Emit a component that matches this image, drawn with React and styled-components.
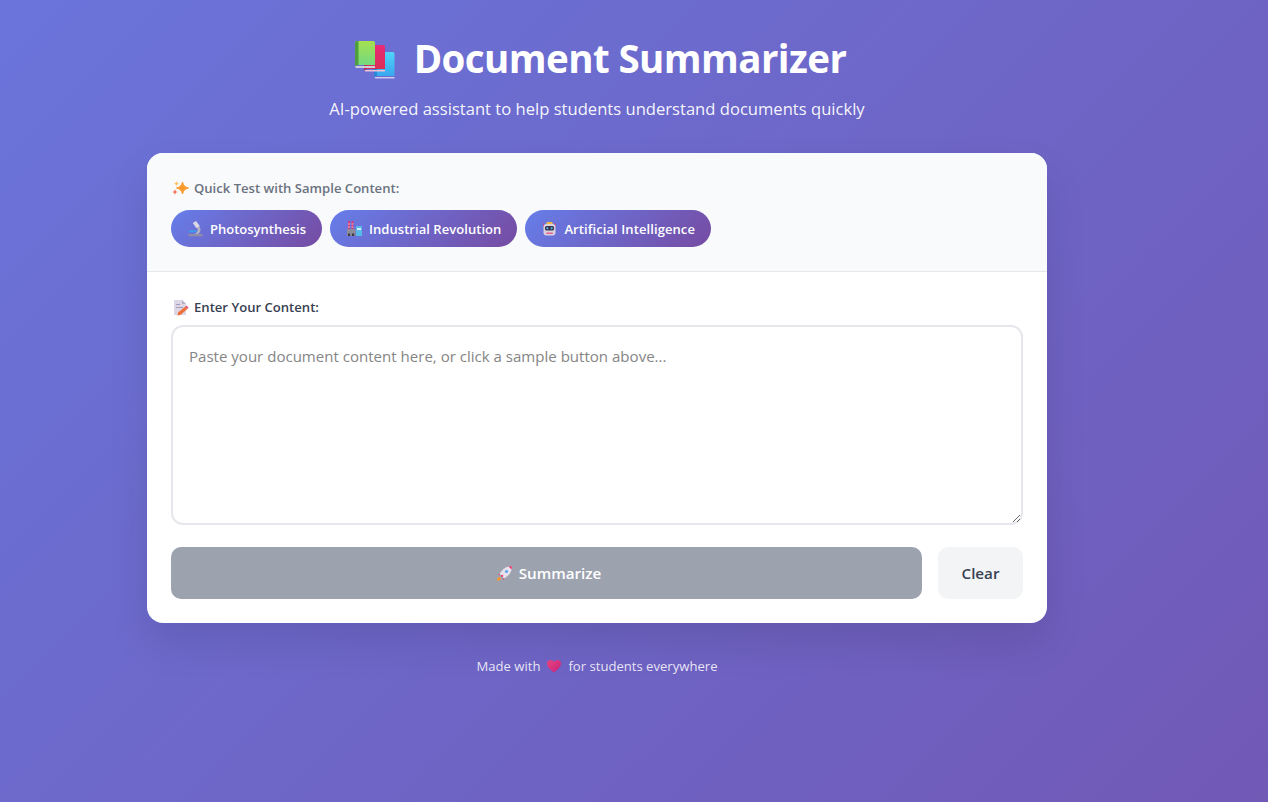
import React from 'react';
import styled, { createGlobalStyle } from 'styled-components';

const FONT = "'Open Sans', 'Noto Sans', sans-serif";

const GlobalStyle = createGlobalStyle`
  * { box-sizing: border-box; }
  html, body { margin: 0; padding: 0; }
  body {
    min-height: 100vh;
    font-family: ${FONT};
    background: linear-gradient(135deg, #6a74da 0%, #7159b6 100%);
  }
`;

const Page = styled.div`
  width: 1194px;
  padding: 32px 147px 0;
`;

const Header = styled.header`
  color: #fff;
  margin-bottom: 32px;
`;

const Title = styled.h1`
  display: flex;
  justify-content: center;
  align-items: center;
  gap: 17px;
  margin: 0 0 13px;
  font-size: 38.5px;
  line-height: 52px;
  font-weight: 700;
  letter-spacing: -0.58px;

  svg {
    margin-left: 5px;
  }
`;

const Subtitle = styled.p`
  margin: 0;
  text-align: center;
  font-size: 16.6px;
  line-height: 24px;
  color: rgba(255, 255, 255, 0.95);
`;

const Card = styled.main`
  background: #fff;
  border-radius: 16px;
  overflow: hidden;
  box-shadow: 0 20px 40px rgba(0, 0, 0, 0.1);
`;

const SampleSection = styled.section`
  padding: 24px;
  background: #f9fafb;
  border-bottom: 1px solid #e5e7eb;
`;

const InputSection = styled.section`
  padding: 24px;
`;

const Label = styled.div`
  display: flex;
  align-items: center;
  gap: 5px;
  height: 21px;
  font-size: 13.1px;
  font-weight: 600;
  color: ${(p) => p.$color};
  margin-bottom: ${(p) => p.$gap}px;
`;

const Pills = styled.div`
  display: flex;
  gap: 8px;
`;

const Pill = styled.button`
  display: flex;
  align-items: center;
  gap: 6px;
  border: 0;
  border-radius: 20px;
  height: 37px;
  padding: 0 16px;
  font-family: ${FONT};
  font-size: 13px;
  font-weight: 600;
  letter-spacing: ${(p) => p.$track || 0}px;
  color: #fff;
  background: linear-gradient(135deg, #667eea 0%, #764ba2 100%);
`;

const TextArea = styled.textarea`
  display: block;
  width: 100%;
  height: 200px;
  padding: 17px 16px 16px;
  border: 2px solid #e5e7eb;
  border-radius: 12px;
  font-family: ${FONT};
  font-size: 15.05px;
  line-height: 24px;
  outline: none;

  &::placeholder {
    color: #858585;
  }
`;

const Actions = styled.div`
  display: flex;
  gap: 16px;
  margin-top: 22px;
`;

const ActionButton = styled.button`
  display: flex;
  justify-content: center;
  align-items: center;
  gap: 6px;
  height: 52px;
  border: 0;
  border-radius: 10px;
  font-family: ${FONT};
  font-size: 15.2px;
  font-weight: 600;
`;

const Summarize = styled(ActionButton)`
  flex: 1;
  background: #9ca3af;
  color: #fff;

  svg {
    margin-left: 4px;
  }
`;

const Clear = styled(ActionButton)`
  width: 85px;
  background: #f3f4f6;
  color: #374151;
`;

const Footer = styled.footer`
  display: flex;
  justify-content: center;
  align-items: center;
  gap: 6px;
  margin-top: 34px;
  font-size: 13.1px;
  line-height: 18px;
  color: rgba(255, 255, 255, 0.85);
`;

const Emoji = styled.svg`
  display: block;
  flex: none;
  width: ${(p) => p.$size}px;
  height: ${(p) => p.$size}px;
`;

const Books = () => (
  <Emoji $size={44} viewBox="0 -1 44 44" aria-hidden="true">
    <defs>
      <linearGradient id="bGreen" x1="0" y1="0" x2="0" y2="1">
        <stop offset="0" stopColor="#a5e04f" />
        <stop offset="1" stopColor="#70d884" />
      </linearGradient>
      <linearGradient id="bPink" x1="0" y1="0" x2="0" y2="1">
        <stop offset="0" stopColor="#e82a78" />
        <stop offset="1" stopColor="#d92f52" />
      </linearGradient>
      <linearGradient id="bBlue" x1="0" y1="0" x2="0" y2="1">
        <stop offset="0" stopColor="#50d4f8" />
        <stop offset="1" stopColor="#38a4ee" />
      </linearGradient>
    </defs>
    <path d="M23 15h17a1.500 1.500 0 0 1 1.500 1.500V39H24a3 3 0 0 0-3 1.500V17a2 2 0 0 1 2-2z" fill="url(#bBlue)" />
    <path d="M21 17a2 2 0 0 1 2-2h1v24a3 3 0 0 0-3 1.500z" fill="#2a86d8" />
    <path d="M22 40h19.500v1.500H22.500a1 1 0 0 1-.5-1.500z" fill="#cfc9ea" />
    <path d="M13 8h17.500a1.500 1.500 0 0 1 1.500 1.500V32H14a3 3 0 0 0-3 1.500V10a2 2 0 0 1 2-2z" fill="url(#bPink)" />
    <path d="M11 10a2 2 0 0 1 2-2h1v24a3 3 0 0 0-3 1.500z" fill="#b5234f" />
    <path d="M12 33h20v1.500H12.500a1 1 0 0 1-.5-1.500z" fill="#eec0d4" />
    <path d="M4 4h16.500A1.500 1.500 0 0 1 22 5.500V28H5a3 3 0 0 0-3 1.500V6a2 2 0 0 1 2-2z" fill="url(#bGreen)" />
    <path d="M2 6a2 2 0 0 1 2-2h1.500v24H5a3 3 0 0 0-3 1.500z" fill="#4e9e3e" />
    <path d="M3 29h19v2H3.500a1 1 0 0 1-.5-2z" fill="#cfcbd8" />
  </Emoji>
);

const Sparkles = () => (
  <Emoji $size={18} viewBox="0 0 18 18" aria-hidden="true">
    <path d="M11.500 3c1 3.800 2.200 5 6 6-3.800 1-5 2.200-6 6-1-3.800-2.200-5-6-6 3.800-1 5-2.200 6-6z" fill="#fb9a2c" stroke="#fb9a2c" strokeWidth="1" strokeLinejoin="round" />
    <path d="M5.500 2c.4 1.700 1 2.300 2.700 2.700-1.700.4-2.300 1-2.700 2.700-.4-1.700-1-2.300-2.700-2.700 1.700-.4 2.300-1 2.700-2.700z" fill="#fdc56a" />
    <path d="M4 10c.4 1.900 1.100 2.600 3 3-1.900.4-2.600 1.100-3 3-.4-1.900-1.100-2.600-3-3 1.900-.4 2.600-1.100 3-3z" fill="#f4775a" />
  </Emoji>
);

const Microscope = () => (
  <Emoji $size={17} viewBox="0 0 17 17" aria-hidden="true">
    <path d="M1.500 14h14v2.300h-14z" fill="#8f8ea6" />
    <path d="M11 5.500c3.200 2 3.400 6.300.2 8.500H7.500c3.200-1.200 4-4.200 2.300-7z" fill="#b4b2c2" />
    <path d="M5.800 3l3.200-2 3.800 5-3.400 2.200z" fill="#dad8e4" />
    <path d="M2 10.500h7.500V12.200H2z" fill="#3aa0f0" />
  </Emoji>
);

const Factory = () => (
  <Emoji $size={17} viewBox="0 0 17 17" aria-hidden="true">
    <path d="M2 1h1.900v8H2zM5.500 1h1.900v8H5.500z" fill="#d6386f" />
    <path d="M2 3.500h1.900v1H2zM5.500 3.500h1.900v1H5.500zM2 6.500h1.900v1H2zM5.500 6.500h1.900v1H5.500z" fill="#efbbd0" />
    <path d="M1 9h8.500v7H1z" fill="#8d8c99" />
    <path d="M10 6h6v10h-6z" fill="#57b8ea" />
    <path d="M11 8h4v2h-4z" fill="#d3ecf8" />
    <path d="M2 13.500h2.200V16H2zM6 13.500h2.200V16H6z" fill="#3d3c4a" />
  </Emoji>
);

const Robot = () => (
  <Emoji $size={17} viewBox="0 0 17 17" aria-hidden="true">
    <path d="M2 1.500l1.200 5H2zM15 1.500l-1.200 5H15z" fill="#e23c76" />
    <path d="M6 2h5l1 2H5z" fill="#f0b84a" />
    <rect x="2.500" y="4" width="12" height="11.500" rx="3" fill="#d8d2de" />
    <rect x="4" y="6" width="9" height="4.500" rx="1.500" fill="#3a3550" />
    <circle cx="6.300" cy="8.200" r="1" fill="#55c6f5" />
    <circle cx="10.700" cy="8.200" r="1" fill="#55c6f5" />
    <rect x="5" y="12.500" width="7" height="1.500" rx=".7" fill="#e8628f" />
  </Emoji>
);

const Memo = () => (
  <Emoji $size={18} viewBox="0 0 18 18" aria-hidden="true">
    <path d="M3 2h8l4 4v11H3z" fill="#dcd6e6" />
    <path d="M11 2l4 4h-4z" fill="#b9b0c8" />
    <path d="M5 6h4v1H5zM5 9h7v1H5z" fill="#a79cb8" />
    <path d="M7 14.500l7.500-6 2 2.200-7 6.300-3 .5z" fill="#f0703a" />
    <path d="M14.500 8.500l2 2.200 1-1-2-2.200z" fill="#e23c76" />
  </Emoji>
);

const Rocket = () => (
  <Emoji $size={17} viewBox="0 0 17 17" aria-hidden="true">
    <path d="M1 16c.2-2.300.8-3.500 2.300-4.200l1.800 1.800C4.500 15.200 3.300 15.800 1 16z" fill="#f59a2e" />
    <path d="M4 8.500L1.800 9.800l2 .3zM8.500 13l-1.300 2.200-.3-2z" fill="#e8336f" />
    <path d="M15.800 1.200c.3 4-1.200 7.400-4.500 10L8 13.500 3.500 9l2.300-3.300c2.600-3.300 6-4.800 10-4.500z" fill="#e6e1ea" />
    <path d="M15.800 1.200c.1 1.200 0 2.300-.2 3.300l-3.100-3.100c1-.2 2.100-.3 3.300-.2z" fill="#f0356f" />
    <circle cx="10.500" cy="6.500" r="1.600" fill="#5aa7ee" />
    <path d="M6 9.500l1.500 1.500L6.200 12.300 4.700 10.800z" fill="#f0356f" />
  </Emoji>
);

const Heart = () => (
  <Emoji $size={16} viewBox="0 0 16 16" aria-hidden="true">
    <defs>
      <linearGradient id="heartFill" x1="0" y1="0" x2="1" y2="1">
        <stop offset="0" stopColor="#e8457e" />
        <stop offset="1" stopColor="#c9207c" />
      </linearGradient>
    </defs>
    <path d="M8 14.500C3.500 11 1 8.500 1 5.500 1 3.200 2.700 2 4.500 2 6 2 7.300 2.800 8 4.200 8.700 2.800 10 2 11.500 2 13.300 2 15 3.200 15 5.500c0 3-2.500 5.500-7 9z" fill="url(#heartFill)" />
  </Emoji>
);

export default function App() {
  return (
    <Page>
      <GlobalStyle />
      <Header>
        <Title><Books />Document Summarizer</Title>
        <Subtitle>AI-powered assistant to help students understand documents quickly</Subtitle>
      </Header>
      <Card>
        <SampleSection>
          <Label $color="#6b7280" $gap={12}><Sparkles />Quick Test with Sample Content:</Label>
          <Pills>
            <Pill><Microscope />Photosynthesis</Pill>
            <Pill $track={0.05}><Factory />Industrial Revolution</Pill>
            <Pill $track={0.09}><Robot />Artificial Intelligence</Pill>
          </Pills>
        </SampleSection>
        <InputSection>
          <Label $color="#374151" $gap={8}><Memo />Enter Your Content:</Label>
          <TextArea placeholder="Paste your document content here, or click a sample button above..." />
          <Actions>
            <Summarize><Rocket />Summarize</Summarize>
            <Clear>Clear</Clear>
          </Actions>
        </InputSection>
      </Card>
      <Footer>Made with <Heart /> for students everywhere</Footer>
    </Page>
  );
}
